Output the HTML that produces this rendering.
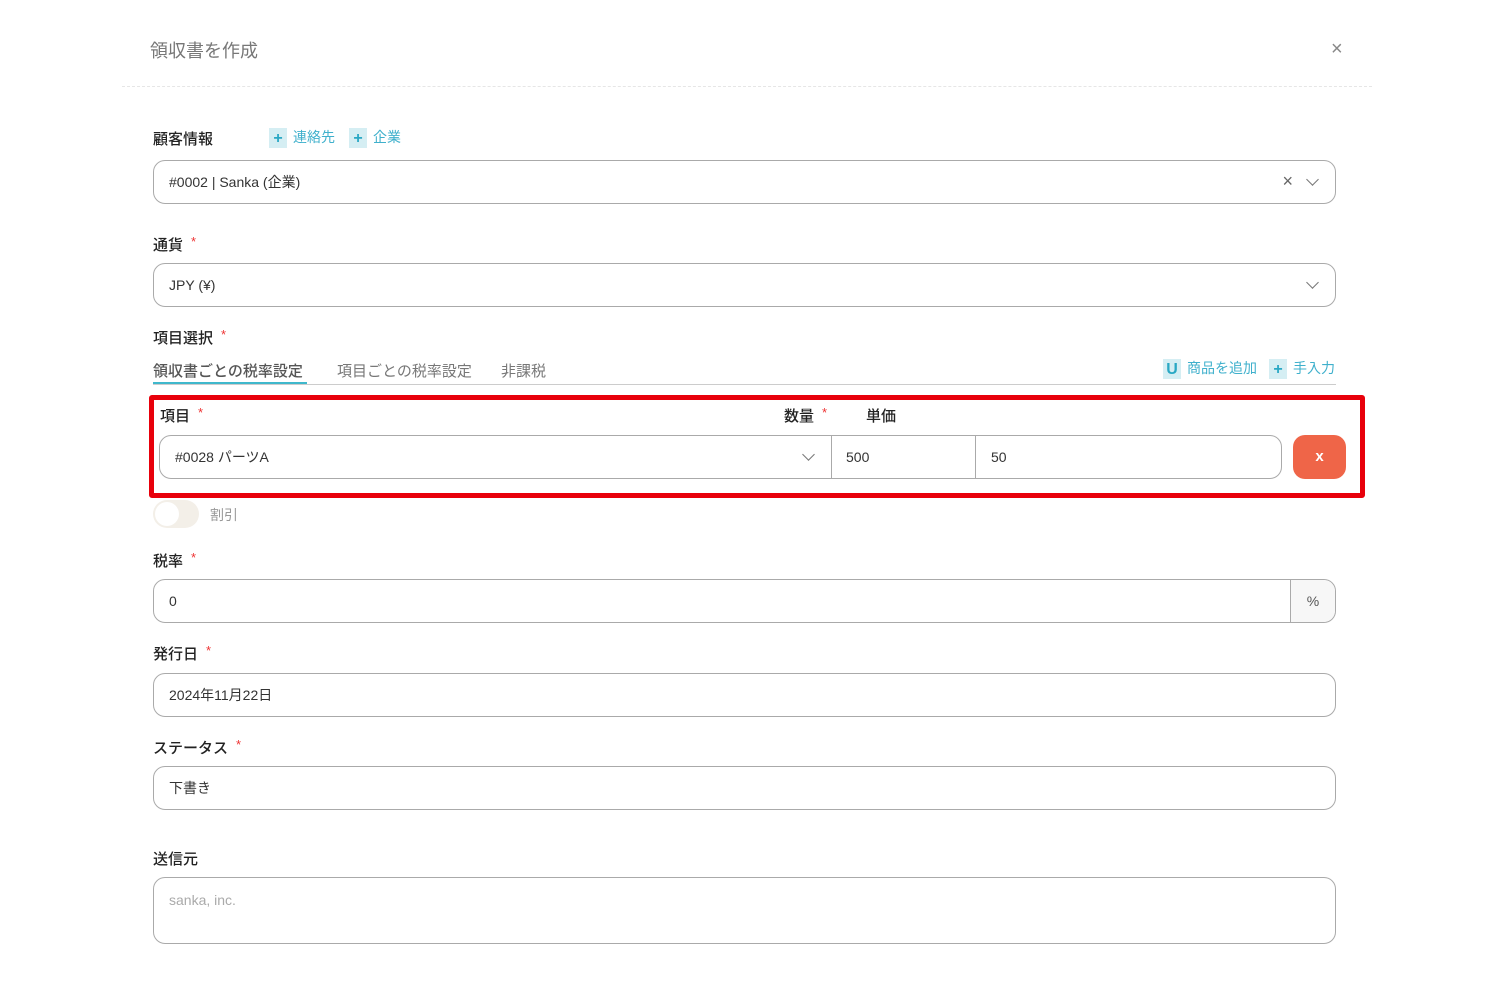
<!DOCTYPE html>
<html><head><meta charset="utf-8"><style>
*{box-sizing:border-box;margin:0;padding:0}
body{width:1500px;height:988px;background:#fff;font-family:"Liberation Sans","Noto Sans CJK JP",sans-serif;color:#333;position:relative;overflow:hidden}
.a{position:absolute}
.t{font-size:18px;color:#777;left:150px;top:37px}
.x{left:1331px;top:38px;font-size:20px;color:#888}
.hr{left:122px;top:86px;width:1250px;border-top:1px dashed #e6e6e6}
.lab{font-size:15px;color:#222;font-weight:500}
.req{color:#e33;margin-left:8px;font-size:13px;vertical-align:top}
.inp{left:153px;width:1183px;height:44px;border:1px solid #aaa;border-radius:12px;font-size:14px;padding:0 15px;display:flex;align-items:center;color:#333}
.chev{position:absolute;right:18px;top:14px;width:9px;height:9px;border-right:1.5px solid #777;border-bottom:1.5px solid #777;transform:rotate(45deg)}
.ib{display:inline-block;width:18px;height:20px;background:#d5eef3;color:#2aa8c4;font-size:16px;text-align:center;line-height:22px;vertical-align:middle;margin-right:6px;font-weight:bold}
.lk{color:#3fb0cc;font-size:14px}
.tab{font-size:15px;color:#777;top:360px}
</style></head><body>
<div class="a t">領収書を作成</div>
<div class="a x">×</div>
<div class="a hr"></div>

<div class="a lab" style="left:153px;top:128px">顧客情報</div>
<div class="a" style="left:269px;top:127px"><span class="ib">+</span><span class="lk">連絡先</span></div>
<div class="a" style="left:349px;top:127px"><span class="ib">+</span><span class="lk">企業</span></div>
<div class="a inp" style="top:160px">#0002 | Sanka (企業)<span style="position:absolute;right:42px;top:10px;color:#666;font-size:18px">×</span><span class="chev"></span></div>

<div class="a lab" style="left:153px;top:234px">通貨<span class="req">*</span></div>
<div class="a inp" style="top:263px">JPY (¥)<span class="chev"></span></div>

<div class="a lab" style="left:153px;top:327px">項目選択<span class="req">*</span></div>
<div class="a tab" style="left:153px;color:#555;font-weight:500">領収書ごとの税率設定</div>
<div class="a" style="left:153px;top:382px;width:154px;height:2px;background:#3fb8cc"></div>
<div class="a tab" style="left:337px">項目ごとの税率設定</div>
<div class="a tab" style="left:501px">非課税</div>
<div class="a" style="left:1163px;top:358px"><span class="ib">U</span><span class="lk">商品を追加</span></div>
<div class="a" style="left:1269px;top:358px"><span class="ib">+</span><span class="lk">手入力</span></div>
<div class="a" style="left:153px;top:384px;width:1183px;border-top:1px solid #ccc"></div>

<div class="a" style="left:149px;top:395px;width:1216px;height:103px;border:5px solid #e8000b;border-radius:3px"></div>
<div class="a lab" style="left:160px;top:405px">項目<span class="req">*</span></div>
<div class="a lab" style="left:784px;top:405px">数量<span class="req">*</span></div>
<div class="a lab" style="left:866px;top:405px">単価</div>
<div class="a" style="left:159px;top:435px;width:1123px;height:44px;border:1px solid #aaa;border-radius:12px;font-size:14px;display:flex">
 <div style="width:672px;padding-left:15px;display:flex;align-items:center;position:relative;border-right:1px solid #aaa">#0028 パーツA<span class="chev" style="right:18px"></span></div>
 <div style="width:144px;padding-left:14px;display:flex;align-items:center;border-right:1px solid #aaa">500</div>
 <div style="padding-left:15px;display:flex;align-items:center">50</div>
</div>
<div class="a" style="left:1293px;top:435px;width:53px;height:44px;background:#ef6548;border-radius:12px;color:#fff;font-size:15px;font-weight:bold;text-align:center;line-height:44px">x</div>

<div class="a" style="left:153px;top:500px;width:46px;height:28px;border-radius:14px;background:#f3efe8"><div style="position:absolute;left:2px;top:2px;width:24px;height:24px;border-radius:50%;background:#fff"></div></div>
<div class="a" style="left:210px;top:505px;font-size:14px;color:#999">割引</div>

<div class="a lab" style="left:153px;top:550px">税率<span class="req">*</span></div>
<div class="a inp" style="top:579px">0<div style="position:absolute;right:0;top:0;width:45px;height:42px;border-left:1px solid #aaa;background:#f7f7f7;border-radius:0 12px 12px 0;text-align:center;line-height:42px;color:#555">%</div></div>

<div class="a lab" style="left:153px;top:643px">発行日<span class="req">*</span></div>
<div class="a inp" style="top:673px">2024年11月22日</div>

<div class="a lab" style="left:153px;top:737px">ステータス<span class="req">*</span></div>
<div class="a inp" style="top:766px">下書き</div>

<div class="a lab" style="left:153px;top:848px">送信元</div>
<div class="a inp" style="top:877px;height:67px;align-items:flex-start;padding-top:14px;color:#aaa">sanka, inc.</div>
</body></html>
